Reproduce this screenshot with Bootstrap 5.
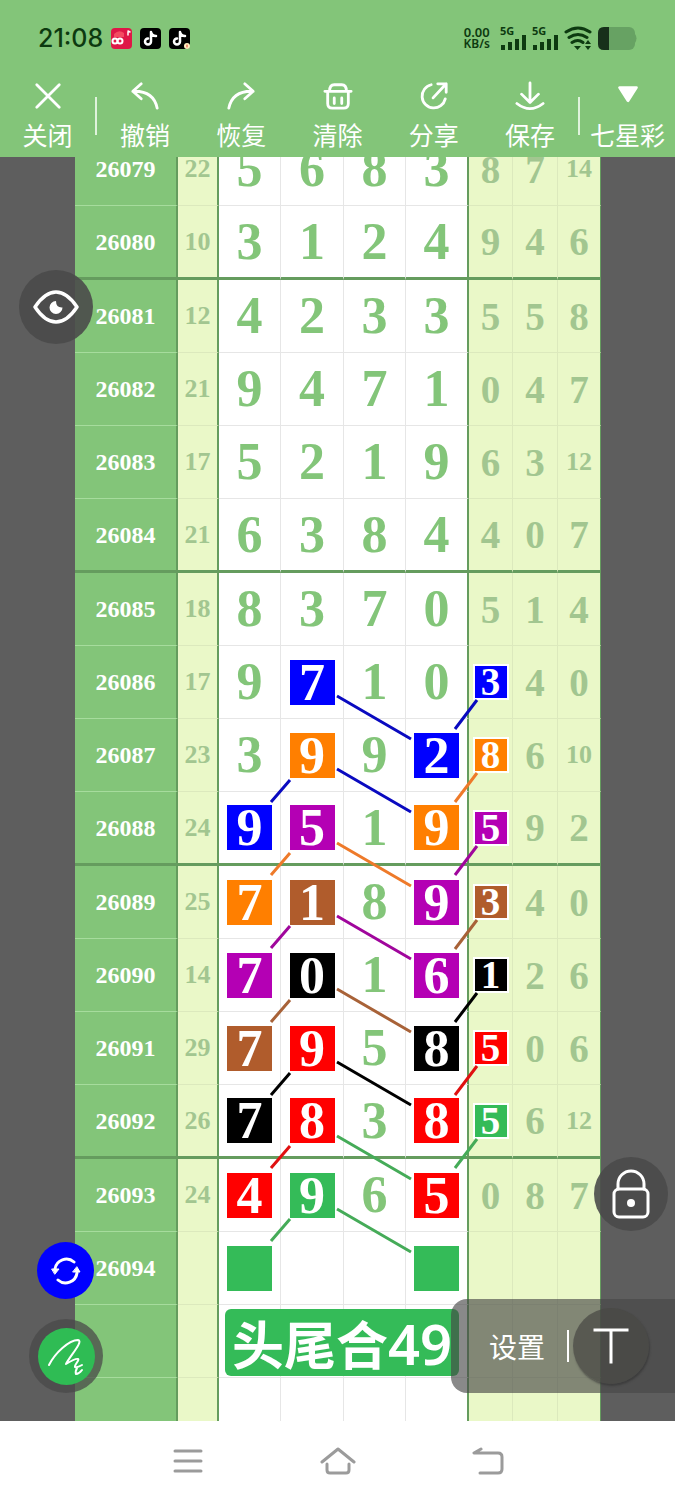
<!DOCTYPE html>
<html lang="zh-CN">
<head>
<meta charset="utf-8">
<meta name="viewport" content="width=device-width, initial-scale=1">
<title>七星彩</title>
<link href="https://cdn.jsdelivr.net/npm/bootstrap@5.3.0/dist/css/bootstrap.min.css" rel="stylesheet">
<style>
:root{--leaf:#83c579;--deep:#659c5e;--lime:#eaf8c8;--sage:#a2c690;--shade:rgba(74,74,74,.9)}
body{font-family:"Noto Sans","Noto Sans CJK SC",sans-serif;background:#fff}
button{font:inherit;color:inherit}
svg{display:block;fill:none;stroke:currentColor;stroke-linecap:round;stroke-linejoin:round}
svg.flat{stroke:none}
svg.bars{stroke:none;fill:currentColor}
/* status bar and toolbar */
.topbar{background:var(--leaf)}
.status{height:76px;padding:0 38px;color:#0d3a10}
.clock{font:500 25px/1 Inter,sans-serif}
.icons-right{gap:6px}
.rate{font-size:12px;line-height:12px;font-weight:600;text-align:center}
.rate b{display:block;font-size:13px;font-weight:600}
.net{font-size:11px;line-height:9px;font-weight:700}
.tools{height:81px;color:#fff;font-family:"Noto Sans CJK SC",sans-serif}
.tool{border:0;background:none;padding:0;font-size:25px;line-height:36px;white-space:nowrap;display:flex;flex-direction:column;align-items:center;justify-content:flex-start}
.tool svg{width:30px;height:30px;margin:5px 0 5px;stroke-width:3;flex:none}
.edge{flex:0 0 95px}
.rule{width:2px;height:38px;margin-top:21px;background:#dff3dc}
/* chart */
.board{background:#5e5e5e;min-height:0}
.sheet{margin:-24px 74px 0 75px}
.draws{table-layout:fixed;border-collapse:separate;border-spacing:0;font-family:"Liberation Serif",serif;font-weight:700;line-height:1;text-align:center}
.draws>tbody>tr>*{height:73px;padding:0;border:0 solid #e6e6e6;border-width:0 1px 1px 0;background:#fff;color:var(--leaf);font-size:52px;line-height:1;box-shadow:none;vertical-align:middle}
.draws>tbody>tr>th{background:var(--leaf);color:#fff;font-size:24px;border-right:2px solid var(--deep);border-bottom-color:#a6dc9d}
.draws>tbody>tr>td:nth-child(2){background:var(--lime);color:var(--sage);font-size:26px;border-right:2px solid var(--deep);border-bottom-color:#dce9bd}
.draws>tbody>tr>td:nth-child(6){border-right:2px solid var(--deep)}
.draws>tbody>tr>td:nth-child(n+7){background:var(--lime);color:var(--sage);font-size:39px;border-color:#dce9bd}
.draws>tbody>tr>td:nth-child(9){border-right-color:var(--deep)}
.draws>tbody>tr>td.two{font-size:26px}
.draws>tbody>tr.cut>:nth-child(n){height:74px;border-bottom:3px solid var(--deep)}
.pick{display:block;width:45px;height:45px;line-height:45px;margin:0 auto;color:#fff;box-shadow:0 0 0 3px #fff}
td:nth-child(7) .pick{width:32px;height:32px;line-height:32px;box-shadow:0 0 0 2px #fff}
.c-b{background:#00f;stroke:#0a0ac0}.c-o{background:#ff7f00;stroke:#ee7a2a}.c-p{background:#b400b4;stroke:#a0069c}.c-w{background:#b05c2c;stroke:#a86238}.c-k{background:#000;stroke:#000}.c-r{background:#f00;stroke:#e01010}.c-g{background:#34bb58;stroke:#45ab58}
.links{position:absolute;left:0;top:0;width:100%;height:1319px;pointer-events:none;stroke-width:3}
.links path{vector-effect:non-scaling-stroke;stroke-linecap:butt}
.note{position:absolute;left:150px;top:1176px;width:234px;height:67px;border-radius:6px;background:#34bb58;color:#fff;font:700 52px/67px "Noto Sans CJK SC",sans-serif;padding-left:7px;white-space:nowrap}
.note span{font-family:"Noto Sans",sans-serif;font-size:56px;font-weight:600;line-height:60px}
/* floating controls */
.float{position:absolute;border:0;padding:0;border-radius:50%;color:#fff;display:flex;align-items:center;justify-content:center;width:74px;height:74px;background:var(--shade)}
.eye{left:19px;top:113px}.lock{right:7px;bottom:190px}
.swap{left:37px;bottom:122px;width:57px;height:57px;background:#00f}
.pen{left:29px;bottom:28px;background:rgba(74,74,74,.75)}
.pen span{width:57px;height:57px;border-radius:50%;background:#2fbc54;display:flex;align-items:center;justify-content:center}
.panel{position:absolute;right:0;bottom:28px;width:224px;height:94px;border-radius:16px 0 0 16px;background:rgba(70,70,70,.64);color:#fff;padding-left:38px;font:28px/1 "Noto Sans CJK SC",sans-serif}
.panel i{width:2px;height:32px;background:#fff;margin:0 4px 0 22px}
.tt{width:76px;height:76px;background:rgba(72,72,68,.72);box-shadow:1px 2px 2px rgba(50,50,50,.6)}
.navkeys{height:79px;color:#9b9b9b}
.navkeys button{width:150px;border:0;background:none;padding:0}
.navkeys svg{margin:0 auto;stroke-width:3}
</style>
</head>
<body class="d-flex flex-column vh-100 overflow-hidden">
<header class="topbar flex-shrink-0">
 <div class="status d-flex align-items-center">
  <span class="clock">21:08</span>
  <div class="d-flex gap-2 ms-2">
   <svg class="flat" width="21" height="21" viewBox="0 0 21 21"><rect width="21" height="21" rx="4" fill="#df1747"/><path d="M3 6Q8 1 13 5V9H3z" fill="#f34b62"/><g stroke="#fff" stroke-width="2"><circle cx="4" cy="13" r="2.500"/><circle cx="9" cy="13" r="2.500"/><path d="M17 3v4M17 3l2 1" stroke-width="1.500"/></g></svg>
   <svg class="flat" width="21" height="21" viewBox="0 0 21 21"><rect width="21" height="21" rx="4" fill="#000"/><path d="M11 4v9.500a3 3 0 1 1-3-3M11 4q1 4 5 4" stroke="#fff" stroke-width="2.500"/></svg>
   <svg class="flat" width="21" height="21" viewBox="0 0 21 21"><rect width="21" height="21" rx="4" fill="#000"/><path d="M11 4v9.500a3 3 0 1 1-3-3M11 4q1 4 5 4" stroke="#fff" stroke-width="2.500"/><circle cx="18" cy="18" r="3" fill="#fff0c0"/><path d="M18 17v2" stroke="#d33"/></svg>
  </div>
  <div class="icons-right d-flex align-items-center ms-auto">
   <div class="rate"><b>0.00</b>KB/s</div>
   <div class="net ms-1">5G<svg class="bars" width="26" height="15" viewBox="0 0 26 15"><path d="M1 10h4v5H1zM8 7h4v8H8zM15 4h4v11h-4zM22 0h4v15h-4z"/></svg></div>
   <div class="net">5G<svg class="bars" width="26" height="15" viewBox="0 0 26 15"><path d="M1 10h4v5H1zM8 7h4v8H8zM15 4h4v11h-4zM22 0h4v15h-4z"/></svg></div>
   <svg width="28" height="24" viewBox="0 0 28 24" stroke-width="3"><path d="M2 6Q14-2 26 6M5 11.500q9-6 18 0M8 16.500q6-4 11 0"/><path d="M10 20h7l-3.500 4zM21 18l3-4 3 4zM21 20l3 4 3-4z" fill="currentColor" stroke="none"/></svg>
   <svg class="flat" width="39" height="23" viewBox="0 0 39 23"><rect width="37" height="23" rx="6" fill="#67a263"/><path d="M37 7q3 4 0 9z" fill="#67a263"/><path d="M11 0H6Q0 0 0 6v11q0 6 6 6h5z" fill="#17301a"/></svg>
  </div>
 </div>
 <div class="tools d-flex">
  <button class="tool edge"><svg viewBox="0 0 32 32"><path d="M4 4l24 24M28 4L4 28"/></svg>关闭</button>
  <div class="rule"></div>
  <button class="tool flex-fill"><svg viewBox="0 0 32 32"><path d="M12 3L3 11l9 8M3 11q22-1 26 18"/></svg>撤销</button>
  <button class="tool flex-fill"><svg viewBox="0 0 32 32"><path d="M20 3l9 8-9 8M29 11Q7 10 3 29"/></svg>恢复</button>
  <button class="tool flex-fill"><svg viewBox="0 0 32 32"><path d="M2 11h28M7 11q0-7 5-7h8q5 0 5 7M5 11v13q0 5 5 5h12q5 0 5-5V11M12 18v6M20 18v6"/></svg>清除</button>
  <button class="tool flex-fill"><svg viewBox="0 0 32 32"><path d="M13 4a12.500 12.500 0 1 0 15 15M15 18L29 3M20 3h9v9"/></svg>分享</button>
  <button class="tool flex-fill"><svg viewBox="0 0 32 32"><path d="M16 2v20M7 14l9 9 9-9M2 24q14 11 28 0"/></svg>保存</button>
  <div class="rule"></div>
  <button class="tool edge"><svg viewBox="0 0 32 32"><path d="M7 7h18l-9 14z" fill="#fff"/></svg>七星彩</button>
 </div>
</header>
<main class="board flex-grow-1 position-relative overflow-hidden">
 <div class="sheet position-relative">
  <table class="draws table mb-0">
   <colgroup><col style="width:103px"><col style="width:41px"><col style="width:62px"><col style="width:63px"><col style="width:62px"><col style="width:63px"><col style="width:44px"><col style="width:45px"><col style="width:43px"></colgroup>
   <tbody>
   <tr><th scope="row">26079</th><td>22</td><td>5</td><td>6</td><td>8</td><td>3</td><td>8</td><td>7</td><td class="two">14</td></tr>
   <tr class="cut"><th scope="row">26080</th><td>10</td><td>3</td><td>1</td><td>2</td><td>4</td><td>9</td><td>4</td><td>6</td></tr>
   <tr><th scope="row">26081</th><td>12</td><td>4</td><td>2</td><td>3</td><td>3</td><td>5</td><td>5</td><td>8</td></tr>
   <tr><th scope="row">26082</th><td>21</td><td>9</td><td>4</td><td>7</td><td>1</td><td>0</td><td>4</td><td>7</td></tr>
   <tr><th scope="row">26083</th><td>17</td><td>5</td><td>2</td><td>1</td><td>9</td><td>6</td><td>3</td><td class="two">12</td></tr>
   <tr class="cut"><th scope="row">26084</th><td>21</td><td>6</td><td>3</td><td>8</td><td>4</td><td>4</td><td>0</td><td>7</td></tr>
   <tr><th scope="row">26085</th><td>18</td><td>8</td><td>3</td><td>7</td><td>0</td><td>5</td><td>1</td><td>4</td></tr>
   <tr><th scope="row">26086</th><td>17</td><td>9</td><td><span class="pick c-b">7</span></td><td>1</td><td>0</td><td><span class="pick c-b">3</span></td><td>4</td><td>0</td></tr>
   <tr><th scope="row">26087</th><td>23</td><td>3</td><td><span class="pick c-o">9</span></td><td>9</td><td><span class="pick c-b">2</span></td><td><span class="pick c-o">8</span></td><td>6</td><td class="two">10</td></tr>
   <tr class="cut"><th scope="row">26088</th><td>24</td><td><span class="pick c-b">9</span></td><td><span class="pick c-p">5</span></td><td>1</td><td><span class="pick c-o">9</span></td><td><span class="pick c-p">5</span></td><td>9</td><td>2</td></tr>
   <tr><th scope="row">26089</th><td>25</td><td><span class="pick c-o">7</span></td><td><span class="pick c-w">1</span></td><td>8</td><td><span class="pick c-p">9</span></td><td><span class="pick c-w">3</span></td><td>4</td><td>0</td></tr>
   <tr><th scope="row">26090</th><td>14</td><td><span class="pick c-p">7</span></td><td><span class="pick c-k">0</span></td><td>1</td><td><span class="pick c-p">6</span></td><td><span class="pick c-k">1</span></td><td>2</td><td>6</td></tr>
   <tr><th scope="row">26091</th><td>29</td><td><span class="pick c-w">7</span></td><td><span class="pick c-r">9</span></td><td>5</td><td><span class="pick c-k">8</span></td><td><span class="pick c-r">5</span></td><td>0</td><td>6</td></tr>
   <tr class="cut"><th scope="row">26092</th><td>26</td><td><span class="pick c-k">7</span></td><td><span class="pick c-r">8</span></td><td>3</td><td><span class="pick c-r">8</span></td><td><span class="pick c-g">5</span></td><td>6</td><td class="two">12</td></tr>
   <tr><th scope="row">26093</th><td>24</td><td><span class="pick c-r">4</span></td><td><span class="pick c-g">9</span></td><td>6</td><td><span class="pick c-r">5</span></td><td>0</td><td>8</td><td>7</td></tr>
   <tr><th scope="row">26094</th><td></td><td><span class="pick c-g"></span></td><td></td><td></td><td><span class="pick c-g"></span></td><td></td><td></td><td></td></tr>
   <tr><th></th><td></td><td></td><td></td><td></td><td></td><td></td><td></td><td></td></tr>
   <tr><th></th><td></td><td></td><td></td><td></td><td></td><td></td><td></td><td></td></tr>
   </tbody>
  </table>
  <!-- connecting strokes between the picked digits of neighbouring draws -->
  <svg class="links" viewBox="0 0 526 1319" preserveAspectRatio="none" aria-hidden="true">
   <path class="c-b" d="M262 563l74 43M402 567l-22 29M262 636l74 43M215 647l-19 22"/>
   <path class="c-o" d="M402 640l-22 29M262 710l74 43M215 720l-19 22"/>
   <path class="c-p" d="M402 713l-22 29M262 783l74 43M215 793l-19 22"/>
   <path class="c-w" d="M402 787l-22 29M262 856l74 43M215 867l-19 22"/>
   <path class="c-k" d="M402 860l-22 29M262 929l74 43M215 940l-19 22"/>
   <path class="c-r" d="M402 933l-22 29M215 1013l-19 22"/>
   <path class="c-g" d="M402 1006l-22 29M262 1003l74 43M262 1076l74 43M215 1086l-19 22"/>
  </svg>
  <div class="note">头尾合<span>49</span></div>
 </div>
 <button class="float eye" aria-label="显示"><svg width="46" height="34" viewBox="0 0 46 34" stroke-width="3.500"><path d="M2 17Q12 2 23 2t21 15Q34 32 23 32T2 17z"/><path d="M23 11a6.500 6.500 0 1 0 6.500 6.500Q23 18 23 11z" fill="#fff" stroke="none"/></svg></button>
 <button class="float lock" aria-label="锁定"><svg width="38" height="50" viewBox="0 0 38 50" stroke-width="3"><rect x="2" y="20" width="34" height="28" rx="5"/><path d="M6 20v-5a13 13 0 0 1 26 0v5"/><circle cx="19" cy="34" r="4" fill="#fff" stroke="none"/></svg></button>
 <button class="float swap" aria-label="切换"><svg width="32" height="28" viewBox="0 0 32 28" stroke-width="3"><path d="M24 5A11.500 11.500 0 0 0 5 12M8 23a11.500 11.500 0 0 0 19-7"/><path d="M2 12h7l-4 5zM23 15h7l-3-5z" fill="#fff" stroke-width="1"/></svg></button>
 <button class="float pen" aria-label="画笔"><span><svg width="38" height="38" viewBox="0 0 38 38" stroke-width="2"><path d="M2 28C8 16 22 3 31 3c6 1-8 16-12 24 5-3 10-6 12-5s-4 6-3 8q2 1 7-2M30 31q-2 4-1 6 3 0 6-4"/></svg></span></button>
 <div class="panel d-flex align-items-center">
  <button class="border-0 bg-transparent p-0">设置</button><i></i>
  <button class="tt border-0 rounded-circle p-0 d-flex align-items-center justify-content-center" aria-label="文字"><svg width="36" height="36" viewBox="0 0 36 36" stroke-width="3"><path d="M2 2h32M18 2v32" stroke-linecap="square"/></svg></button>
 </div>
</main>
<nav class="navkeys d-flex justify-content-center flex-shrink-0 bg-white">
 <button aria-label="菜单"><svg width="30" height="24" viewBox="0 0 30 24"><path d="M2 2h26M2 12h26M2 22h26"/></svg></button>
 <button aria-label="主页"><svg width="36" height="28" viewBox="0 0 36 28"><path d="M2 15L18 2l16 13M7 17v6q0 3 3 3h16q3 0 3-3v-6"/></svg></button>
 <button aria-label="返回"><svg width="32" height="28" viewBox="0 0 32 28"><path d="M9 2L2 6h24q4 0 4 4v12q0 4-4 4H8"/></svg></button>
</nav>
<script src="https://cdn.jsdelivr.net/npm/bootstrap@5.3.0/dist/js/bootstrap.bundle.min.js"></script>
</body>
</html>
